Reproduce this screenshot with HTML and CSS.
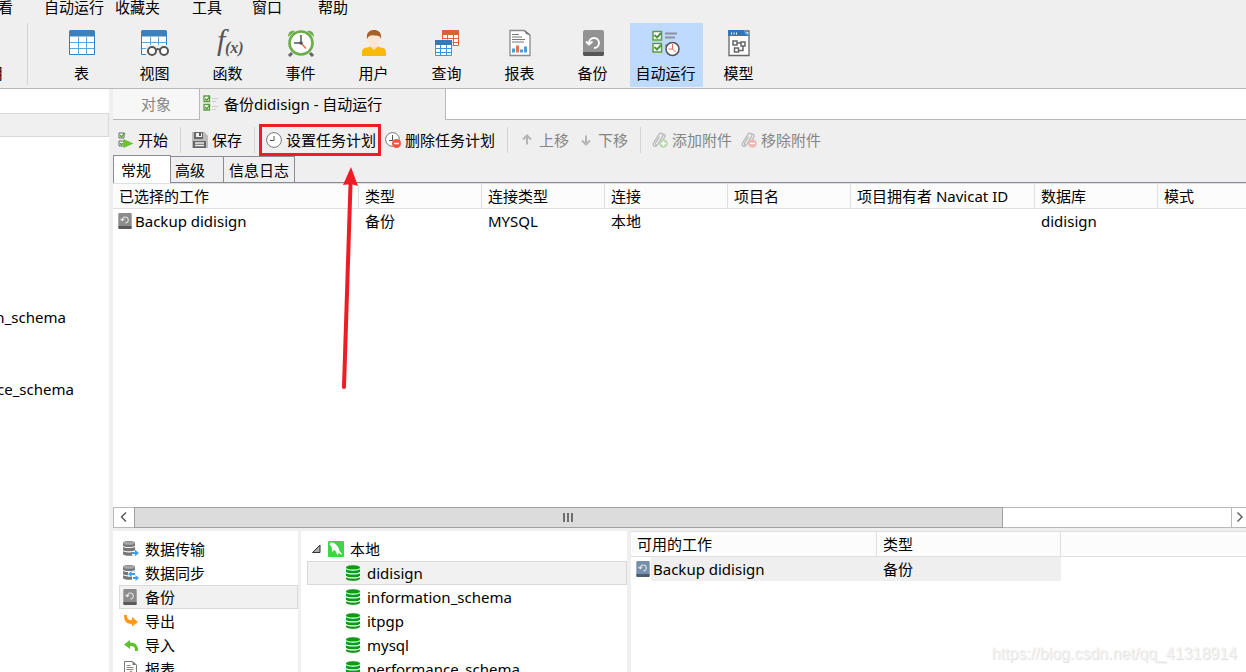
FILE: index.html
```html
<!DOCTYPE html>
<html lang="zh-CN">
<head>
<meta charset="utf-8">
<title>备份didisign - 自动运行</title>
<link rel="stylesheet" href="styles.css">
</head>
<body>
<svg class="defs" width="0" height="0" aria-hidden="true">
  <symbol id="i-backup" viewBox="0 0 14 16">
    <path d="M1.500 0h11a1.200 1.200 0 0 1 1.200 1.200V15a1 1 0 0 1-1 1H1.300a1 1 0 0 1-1-1V1.200A1.200 1.200 0 0 1 1.500 0z" fill="currentColor"/>
    <path d="M.3 13h13.400v2a1 1 0 0 1-1 1H1.300a1 1 0 0 1-1-1z" fill="#000" opacity=".35"/>
    <path d="M4.300 7.300a3 3 0 1 1 3 2.700M2.500 5.800 4.300 7.700l2-1.600" fill="none" stroke="#e4e4e4" stroke-width="1.100"/>
  </symbol>
  <symbol id="i-db" viewBox="0 0 14 16">
    <path d="M0 2.500C0-.6 14-.6 14 2.500v11c0 3.200-14 3.200-14 0z" fill="#0c9b14"/>
    <path d="M0 3.400c1 2.200 13 2.200 14 0M0 7.300c1 2.200 13 2.200 14 0M0 11.200c1 2.200 13 2.200 14 0" fill="none" stroke="#fff" stroke-width="1.200"/>
  </symbol>
  <symbol id="i-stack" viewBox="0 0 12 15">
    <path d="M0 2.200C0-.6 12-.6 12 2.200v10.600c0 2.700-12 2.700-12 0z" fill="#777"/>
    <ellipse cx="6" cy="2.200" rx="5.500" ry="1.600" fill="#a8a8a8"/>
    <path d="M0 5.200c1 1.800 11 1.800 12 0M0 9.500c1 1.800 11 1.800 12 0" fill="none" stroke="#fff" stroke-width="1.100"/>
  </symbol>
  <symbol id="i-report" viewBox="0 0 22 27">
    <path d="M1 1h14l6 5v20H1z" fill="#fff" stroke="#8a8a8a" stroke-width="1.300"/>
    <path d="M15 0l7 5.500-5-1z" fill="#777"/>
    <path d="M3 5h7M3 7.500h10M3 10h13M3 12.500h12" stroke="#777"/>
    <path d="M3 19h3v4H3zM11 20h3v3h-3zM15 17h3v6h-3z" fill="#4d9ad8"/>
    <path d="M7 16h3v7H7z" fill="#f0704a"/>
  </symbol>
  <symbol id="i-report-small" viewBox="0 0 16 16">
    <path d="M1.500.5h8l4 3.500v11.500h-12z" fill="#fff" stroke="#777"/>
    <path d="M9.500.5V4h4z" fill="#777"/>
    <path d="M3.500 4.500h4M3.500 6.500h7M3.500 8.500h7" stroke="#888"/>
    <path d="M4 11h2v3H4zM10 11h2v3h-2z" fill="#4d9ad8"/>
    <path d="M7 10h2v4H7z" fill="#f0704a"/>
  </symbol>
  <symbol id="i-clip" viewBox="0 0 16 16">
    <path d="M1.500 11 7 2.300c1.500-2.300 4.800-.6 3.600 1.800L6 12.200c-1.100 1.700-3.300.5-2.400-1.200L7.500 4.500M1.500 11c-1.400 2.500 1.500 4.500 3.500 2.500M10.700 2c2-.2 2.800 1 2.300 2.500L11 8" fill="none" stroke="#b5b5b5" stroke-width="1.200"/>
  </symbol>
</svg>

<nav class="menubar">
  <span>查看</span><span>自动运行</span><span>收藏夹</span><span>工具</span><span>窗口</span><span>帮助</span>
</nav>

<header class="ribbon">
  <div class="ribbon-prev">用</div>
  <div class="ribbon-items">
    <button class="tool"><svg width="26" height="28" viewBox="0 0 26 28"><path d="M.5 3.500h25v22H.500z" fill="#fff" stroke="#2f7fc1"/><path d="M1 13.500h24M1 19.500h24M9.500 8v18M17.500 8v18" stroke="#5ba6dc" fill="none"/><path d="M0 2.500A1.500 1.500 0 0 1 1.500 1h23A1.500 1.500 0 0 1 26 2.500V7.500H0z" fill="#3a82bf"/></svg><span>表</span></button>
    <button class="tool"><svg width="28" height="28" viewBox="0 0 28 28"><path d="M.5 3.500h25v22H.500z" fill="#fff" stroke="#2f7fc1"/><path d="M1 13.500h24M9.500 8v18M17.500 8v18M1 19.500h24" stroke="#5ba6dc" fill="none"/><path d="M0 2.500A1.500 1.500 0 0 1 1.500 1h23A1.500 1.500 0 0 1 26 2.500V7.500H0z" fill="#3a82bf"/><path d="M5 16h23v12H5z" fill="#efefef"/><g fill="#fff" stroke="#555" stroke-width="2"><circle cx="11" cy="22" r="4"/><circle cx="23" cy="22" r="4"/><path d="M15 21c1-1.500 3-1.500 4 0" fill="none"/></g></svg><span>视图</span></button>
    <button class="tool"><svg class="fx" width="28" height="28" viewBox="0 0 28 28"><text x="3" y="21" class="fx-big">f</text><text x="11" y="24" class="fx-small">(x)</text></svg><span>函数</span></button>
    <button class="tool"><svg width="28" height="28" viewBox="0 0 28 28"><path d="M5 24l-3 3M23 24l3 3" stroke="#666" stroke-width="3"/><path d="M1 8C1 3 4 1 8 2zM27 8c0-5-3-7-7-6z" fill="#6db04a"/><circle cx="14" cy="14" r="11.500" fill="#fff" stroke="#69ae49" stroke-width="2.600"/><path d="M14 6v8M7 14h7" stroke="#555" stroke-width="1.500"/><path d="M14 14l5 5.500" stroke="#f0674a" stroke-width="1.500"/><circle cx="14" cy="14" r="1.800" fill="#555"/></svg><span>事件</span></button>
    <button class="tool"><svg width="26" height="28" viewBox="0 0 26 28"><path d="M1 27v-4c0-3 2-4 5-4.500l5-1.500h4l5 1.500c3 .5 5 1.500 5 4.500v4z" fill="#f8b908"/><path d="M9.500 15h7v3l-3.500 3-3.500-3z" fill="#f7dfc9"/><ellipse cx="13" cy="10.500" rx="6" ry="7.500" fill="#fbe6d5"/><path d="M6 10C5 3 9 1 13 1s8 2 7 9c-1-3-2-3-6-3.500C10 6 8 6 6 10z" fill="#a95f28"/></svg><span>用户</span></button>
    <button class="tool"><svg width="26" height="28" viewBox="0 0 26 28"><path d="M8.500 1.500h16v15h-16z" fill="#fff" stroke="#d9603f"/><path d="M8 1h17v5H8z" fill="#d9603f"/><path d="M13.500 6v10M19.500 6v10M9 9.500h16M9 13.500h16" stroke="#d9603f"/><path d="M.5 10.500h18v17H.500z" fill="#efefef"/><path d="M1.500 11.500h16v15h-16z" fill="#fff" stroke="#3f94da"/><path d="M1 11h17v5H1z" fill="#3479b8"/><path d="M6.500 16v10M12.500 16v10M1 19.500h16M1 23.500h16" stroke="#3f94da"/></svg><span>查询</span></button>
    <button class="tool"><svg width="22" height="28"><use href="#i-report"/></svg><span>报表</span></button>
    <button class="tool"><svg width="22" height="28" viewBox="0 0 22 28"><rect x="1" y="1" width="21" height="26" rx="2" fill="#929292"/><path d="M1 23h21v2a2 2 0 0 1-2 2H3a2 2 0 0 1-2-2z" fill="#555"/><path d="M7 14a5 5 0 1 1 5 5M4 12.500l3 3 3.500-3" fill="none" stroke="#fff" stroke-width="1.900"/></svg><span>备份</span></button>
    <button class="tool tool-active"><svg width="28" height="28" viewBox="0 0 28 28"><path d="M1 2.500h8.500V11H1zM1 14.500h8.500V23H1z" fill="#fff" stroke="#5e9b42" stroke-width="1.500"/><path d="M2.500 6l2.500 2.500 4-4.500M2.500 18l2.500 2.500L9 16" fill="none" stroke="#4f963a" stroke-width="1.900"/><path d="M13 4.500h12M13 8.500h10M13 16.500h4" stroke="#8b929c" stroke-width="2"/><circle cx="20.500" cy="20" r="6.500" fill="#fff" stroke="#555" stroke-width="1.500"/><path d="M20.500 15v5h-4M20.500 20l3 3" stroke="#e0675a" fill="none"/></svg><span>自动运行</span></button>
    <button class="tool"><svg width="22" height="28" viewBox="0 0 22 28"><path d="M1 2h20v24.500H1z" fill="#fff" stroke="#666" stroke-width="1.300"/><path d="M0 1h16l6 6H0z" fill="#2f78b5"/><path d="M16 1l6 6-5-2z" fill="#65aee4"/><path d="M3 4.500h1M5.500 4.500h1M8 4.500h1" stroke="#fff" stroke-width="2"/><path d="M5 12h4v4H5zM13 13h4v4h-4zM6.500 19h4v4h-4zM9 14h4M10.500 21.500H15V17" fill="none" stroke="#666" stroke-width="1.500"/></svg><span>模型</span></button>
  </div>
</header>

<main class="workspace">
  <aside class="sidebar">
    <div class="side-selected"></div>
    <ul class="side-tree"><li class="side-info">information_schema</li><li>performance_schema</li></ul>
  </aside>

  <section class="editor">
    <div class="doc-tabs">
      <button class="doc-tab">对象</button>
      <button class="doc-tab doc-tab-active"><svg width="16" height="18" viewBox="0 0 16 18"><path d="M1 1h5.500v5.500H1zM1 9.500h5.500V15H1z" fill="#fff" stroke="#5e9b42" stroke-width="1.300"/><path d="M2 3.500l1.700 1.700L7 1.500M2 12l1.700 1.700L7 10" fill="none" stroke="#4f963a" stroke-width="1.300"/><path d="M9 3.500h6M9 6.500h4M9 11.500h6M9 14.500h4" stroke="#ccc"/></svg><span>备份didisign - 自动运行</span></button>
      <div class="doc-rest"></div>
    </div>

    <div class="actions">
      <div class="group">
        <button class="act"><svg width="16" height="16" viewBox="0 0 16 16"><path d="M1 1h5v5H1zM1 9h5v5H1z" fill="#fff" stroke="#666"/><path d="M2 3l1.500 2L7 1M2 11l1.500 2L5 11" fill="none" stroke="#4fa33a" stroke-width="1.300"/><path d="M5.500 7l10 4.500-10 4.500z" fill="#6cc42c"/></svg><span>开始</span></button>
      </div>
      <div class="group">
        <button class="act"><svg width="16" height="16" viewBox="0 0 16 16"><path d="M0 0h12.500L16 4v12H0z" fill="#bbb"/><path d="M2 0h9v7H2zM1 9h13v7H1z" fill="#666"/><path d="M4 1h6v4H4z" fill="#efefef"/><path d="M7 1h2v3H7z" fill="#555"/><path d="M3 11h9M3 13.500h9" stroke="#eee" stroke-width="1.300"/></svg><span>保存</span></button>
      </div>
      <div class="group group-plan">
        <button class="act act-marked"><svg width="16" height="16" viewBox="0 0 16 16"><circle cx="8" cy="8" r="7.400" fill="#fff" stroke="#777"/><path d="M8 4v4.500H4" fill="none" stroke="#555"/></svg><span>设置任务计划</span></button>
        <button class="act"><svg width="16" height="16" viewBox="0 0 16 16"><circle cx="7.500" cy="7.500" r="6.900" fill="#fff" stroke="#777"/><path d="M7.500 3v5M4 8.500h4" fill="none" stroke="#555"/><circle cx="11.500" cy="11.500" r="4.500" fill="#f25442"/><path d="M9 11.500h5" stroke="#fff" stroke-width="1.500"/></svg><span>删除任务计划</span></button>
      </div>
      <div class="group group-wide">
        <button class="act" disabled><svg width="16" height="16" viewBox="0 0 16 16"><path d="M8 12.500V4M4 7.500l4-4 4 4" fill="none" stroke="#b5b5b5" stroke-width="2"/></svg><span>上移</span></button>
        <button class="act" disabled><svg width="16" height="16" viewBox="0 0 16 16"><path d="M8 3.500V12M4 8.500l4 4 4-4" fill="none" stroke="#b5b5b5" stroke-width="2"/></svg><span>下移</span></button>
      </div>
      <div class="group group-wide">
        <button class="act" disabled><svg width="16" height="16" viewBox="0 0 16 16"><use href="#i-clip"/><circle cx="11.500" cy="11.500" r="4.300" fill="#bcd8ae"/><path d="M9 11.500h5M11.500 9v5" stroke="#fff" stroke-width="1.300"/></svg><span>添加附件</span></button>
        <button class="act" disabled><svg width="16" height="16" viewBox="0 0 16 16"><use href="#i-clip"/><circle cx="11.500" cy="11.500" r="4.300" fill="#e9b9b5"/><path d="M9 11.500h5" stroke="#fff" stroke-width="1.300"/></svg><span>移除附件</span></button>
      </div>
    </div>

    <div class="sub-tabs">
      <button class="sub-tab sub-tab-active">常规</button><button class="sub-tab sub-tab-wide">高级</button><button class="sub-tab">信息日志</button>
    </div>

    <div class="jobs">
      <table class="grid">
        <colgroup><col class="c-name"><col class="c-std"><col class="c-std"><col class="c-std"><col class="c-std"><col class="c-wide"><col class="c-std"><col></colgroup>
        <thead><tr><th>已选择的工作</th><th>类型</th><th>连接类型</th><th>连接</th><th>项目名</th><th>项目拥有者 Navicat ID</th><th>数据库</th><th>模式</th></tr></thead>
        <tbody><tr><td><span class="job gray"><svg width="14" height="16"><use href="#i-backup"/></svg>Backup didisign</span></td><td>备份</td><td>MYSQL</td><td>本地</td><td></td><td></td><td>didisign</td><td></td></tr></tbody>
      </table>
    </div>

    <div class="scrollbar">
      <button class="scroll-btn" aria-label="向左"><svg width="8" height="12" viewBox="0 0 8 12"><path d="M6 1.500 1.500 6 6 10.500" fill="none" stroke="#555" stroke-width="1.400"/></svg></button>
      <div class="track"><div class="thumb"><i></i><i></i><i></i></div></div>
      <button class="scroll-btn" aria-label="向右"><svg width="8" height="12" viewBox="0 0 8 12"><path d="M2.500 1.500 7 6l-4.500 4.500" fill="none" stroke="#555" stroke-width="1.400"/></svg></button>
    </div>

    <div class="panels">
      <ul class="panel kinds">
        <li><svg width="16" height="16" viewBox="0 0 16 16"><use href="#i-stack" width="12" height="15"/><path d="M9 12h6M12.500 9.500 15 12l-2.500 2.500" fill="none" stroke="#fff" stroke-width="4"/><path d="M9 12h5" stroke="#3f9df0" stroke-width="2"/><path d="M12 8.800 16 12l-4 3.200z" fill="#3f9df0"/></svg>数据传输</li>
        <li><svg width="16" height="16" viewBox="0 0 16 16"><use href="#i-stack" width="12" height="15"/><path d="M5 9h7M9 13h6" stroke="#fff" stroke-width="5"/><path d="M7 9h5M10 13h4" stroke="#3f9df0" stroke-width="2"/><path d="M8.500 6v6L5 9zM12.500 10v6l3.500-3z" fill="#3f9df0"/></svg>数据同步</li>
        <li class="selected gray"><svg width="16" height="16"><use href="#i-backup" width="14" height="16"/></svg>备份</li>
        <li><svg width="16" height="16" viewBox="0 0 16 16"><path d="M1 2h3c0 4 1 5 5 5V4l6 5-6 4.500V11C3 11 1 8 1 2z" fill="#ff9a16"/></svg>导出</li>
        <li><svg width="16" height="16" viewBox="0 0 16 16"><path d="M15 14h-3c0-4-1-5-5-5v3L1 7.500 7 3v2.500c6 0 8 3 8 8.500z" fill="#5fbf2d"/></svg>导入</li>
        <li><svg width="16" height="16"><use href="#i-report-small"/></svg>报表</li>
      </ul>
      <ul class="panel tree">
        <li class="root"><svg width="10" height="10" viewBox="0 0 10 10"><path d="M8 1v7.500H.500z" fill="#aaa" stroke="#333"/></svg><svg width="16" height="16" viewBox="0 0 16 16"><rect width="16" height="16" rx="1" fill="#3fd44b"/><path d="M2.500 1.500c2.500-.3 4.500.5 6 2.500 1.500 1.800 2.500 3.500 3 6l2.500 3-.5.500-3-1.500-1 2.500-1-2.500C8 10.500 7.500 9.500 6 9l-1.500 2C3.500 9.500 4.500 7 3 5L1.500 3.500z" fill="#fff"/></svg><span>本地</span></li>
        <li class="selected"><svg width="14" height="16"><use href="#i-db"/></svg>didisign</li>
        <li><svg width="14" height="16"><use href="#i-db"/></svg>information_schema</li>
        <li><svg width="14" height="16"><use href="#i-db"/></svg>itpgp</li>
        <li><svg width="14" height="16"><use href="#i-db"/></svg>mysql</li>
        <li><svg width="14" height="16"><use href="#i-db"/></svg>performance_schema</li>
      </ul>
      <div class="panel available">
        <table class="grid">
          <colgroup><col class="c-name"><col class="c-wide"><col></colgroup>
          <thead><tr><th>可用的工作</th><th>类型</th><th></th></tr></thead>
          <tbody><tr class="hot"><td><span class="job blue"><svg width="14" height="16"><use href="#i-backup"/></svg>Backup didisign</span></td><td>备份</td><td></td></tr></tbody>
        </table>
      </div>
    </div>
  </section>
</main>

<svg class="pointer" width="24" height="224" viewBox="0 0 24 224" aria-hidden="true"><path d="M6 219 12.500 16" stroke="#ee1c25" stroke-width="4" stroke-linecap="round"/><path d="M13-1 20 18 13 16 5 17z" fill="#ee1c25"/></svg>
<div class="watermark">https://blog.csdn.net/qq_41318914</div>
</body>
</html>
```
FILE: styles.css
```css
* { box-sizing: border-box; }
body {
  margin: 0;
  height: 100vh;
  display: flex;
  flex-direction: column;
  overflow: hidden;
  position: relative;
  background: #efefef;
  color: #000;
  font: 15px/24px "Noto Sans", "Noto Sans CJK SC", sans-serif;
}
button {
  font: inherit;
  color: inherit;
  background: none;
  border: 0;
  border-radius: 0;
  padding: 0;
  white-space: nowrap;
}
svg { display: block; flex: none; }
ul { list-style: none; margin: 0; padding: 0; }
.defs { position: absolute; }

.menubar {
  display: grid;
  grid-template-columns: 61px 71px 77px 60px 66px auto;
  margin-left: -17px;
  height: 23px;
  line-height: 14px;
  white-space: nowrap;
}
.ribbon {
  display: flex;
  height: 66px;
  border-bottom: 1px solid #b9b9b9;
}
.ribbon-prev {
  width: 28px;
  height: 62px;
  margin-right: 18px;
  border-right: 1px solid #d5d5d5;
  padding-top: 38px;
  text-indent: -12px;
}
.ribbon-items { display: flex; }
.tool {
  width: 73px;
  height: 64px;
  padding: 6px 2px 0 0;
  display: flex;
  flex-direction: column;
  align-items: center;
  gap: 4px;
}
.tool-active { background: #bfdaff; }
.fx { overflow: visible; }
.fx-big, .fx-small {
  font-family: "Liberation Serif", serif;
  font-style: italic;
  fill: #555;
}
.fx-big { font-size: 30px; }
.fx-small { font-size: 16px; font-weight: 700; }

.workspace {
  flex: 1;
  min-height: 0;
  display: grid;
  grid-template-columns: 109px minmax(0, 1fr);
  gap: 4px;
}
.sidebar { background: #fff; overflow: hidden; padding-top: 24px; }
.side-selected { height: 24px; background: #f0f0f0; border: 1px solid #d9d9d9; border-left: 0; }
.side-tree { margin: 168px 0 0 -79px; }
.side-info { margin-bottom: 48px; }

.editor { display: flex; flex-direction: column; min-width: 0; min-height: 0; }
.doc-tabs { display: flex; height: 31px; line-height: 22px; }
.doc-tab {
  width: 87px;
  border-right: 1px solid #b9b9b9;
  border-bottom: 1px solid #b9b9b9;
  background: #f7f7f7;
  color: #858585;
}
.doc-tab-active {
  width: 246px;
  display: flex;
  align-items: center;
  gap: 5px;
  padding: 0 0 1px 3px;
  border-bottom: 0;
  background: #efefef;
  color: #000;
}
.doc-rest { flex: 1; background: #fff; border-bottom: 1px solid #b9b9b9; }

.actions { display: flex; align-items: center; height: 40px; padding-left: 5px; }
.group { display: flex; align-items: center; gap: 8px; }
.group + .group { margin-left: 12px; padding-left: 11px; border-left: 1px solid #d5d5d5; }
.group + .group-plan { padding-left: 7px; gap: 7px; }
.group-wide { gap: 9px; }
.act { display: flex; align-items: center; gap: 4px; height: 26px; }
.act:disabled { color: #858585; }
.act-marked { outline: 3px solid #ee1c25; padding: 0 2px 0 4px; }

.sub-tabs {
  display: flex;
  align-items: flex-end;
  height: 28px;
  margin-top: -5px;
  border-bottom: 1px solid #8b8b95;
}
.sub-tab {
  height: 26px;
  padding: 0 5px;
  border: 1px solid #8b8b95;
  border-bottom: 0;
  border-left: 0;
}
.sub-tab-wide { padding: 0 18px 0 4px; }
.sub-tab-active {
  height: 28px;
  margin-bottom: -1px;
  padding: 0 19px 0 7px;
  border-left: 1px solid #8b8b95;
  background: #fff;
}

.jobs { flex: 1; min-height: 0; background: #fff; overflow: hidden; }
.grid { width: 100%; table-layout: fixed; border-collapse: separate; border-spacing: 0; }
.grid th {
  height: 26px;
  padding: 0 0 0 6px;
  border: solid #dfdfdf;
  border-width: 1px 1px 1px 0;
  background: #fcfcfc;
  font-weight: 400;
  text-align: left;
  white-space: nowrap;
}
.grid th:last-child { border-right: 0; }
.grid td { height: 24px; padding: 0 0 0 6px; white-space: nowrap; }
.grid td:first-child { padding-left: 5px; }
.c-name { width: 246px; }
.c-std { width: 123px; }
.c-wide { width: 184px; }
.job { display: flex; align-items: center; gap: 3px; }
.gray svg { color: #8b8b8b; }
.blue svg { color: #7590ac; }
.hot td { background: #efefef; }
.hot td:first-child { background: linear-gradient(to right, #fff 20px, #efefef 20px); }
.hot td:last-child { background: #fff; }

.scrollbar { display: flex; height: 21px; background: #fff; border: 1px solid #b9b9b9; border-right: 0; }
.scroll-btn { width: 20px; display: grid; place-items: center; }
.scroll-btn:last-child { width: 15px; border-left: 1px solid #b9b9b9; }
.track { flex: 1; display: flex; margin: -1px 0; }
.thumb {
  width: 79.2%;
  display: flex;
  align-items: center;
  justify-content: center;
  gap: 2px;
  background: #dcdcdc;
  border: 1px solid #a0a0a0;
}
.thumb i { width: 2px; height: 9px; background: #707070; }

.panels {
  flex: 0 0 21vh;
  margin-top: 3px;
  display: grid;
  grid-template-columns: 185px 326px minmax(0, 1fr);
  column-gap: 3px;
  overflow: hidden;
}
.panel { background: #fff; overflow: hidden; }
.available { margin-left: 1px; }
.kinds, .tree { padding: 6px 0 0 6px; }
.kinds li, .tree li {
  display: flex;
  align-items: center;
  height: 24px;
  border: 1px solid transparent;
  white-space: nowrap;
}
.kinds li { gap: 6px; padding-left: 3px; }
.tree li { gap: 7px; padding-left: 38px; }
.tree .root { gap: 6px; padding-left: 4px; }
.kinds .selected, .tree .selected { background: #f1f1f1; border-color: #d9d9d9; }

.pointer { position: absolute; left: 338px; top: 168px; overflow: visible; }
.watermark {
  position: absolute;
  right: 9px;
  bottom: 6px;
  font: 16px/24px "Liberation Sans", sans-serif;
  color: #f4f4f4;
  text-shadow: 1px 1px 1px #dcdcdc;
}
```
